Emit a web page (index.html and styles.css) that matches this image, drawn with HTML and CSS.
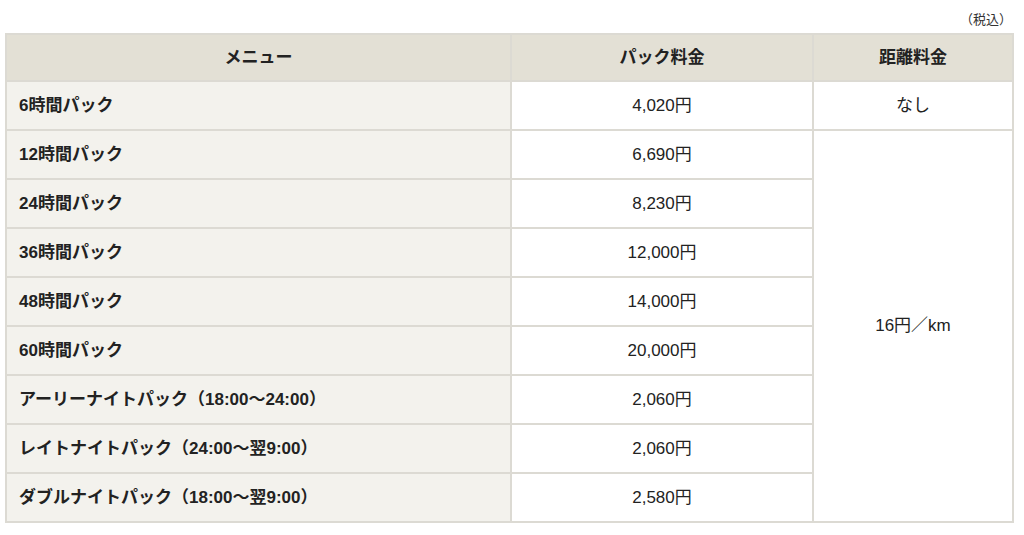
FILE: index.html
```html
<!DOCTYPE html>
<html lang="ja">
<head>
<meta charset="utf-8">
<link rel="stylesheet" href="styles.css">
</head>
<body>
<div class="wrap">
  <p class="note">（税込）</p>
  <table class="price">
    <colgroup>
      <col class="c-menu">
      <col class="c-pack">
      <col class="c-dist">
    </colgroup>
    <thead>
      <tr>
        <th>メニュー</th>
        <th>パック料金</th>
        <th>距離料金</th>
      </tr>
    </thead>
    <tbody>
      <tr><th>6時間パック</th><td>4,020円</td><td>なし</td></tr>
      <tr><th>12時間パック</th><td>6,690円</td><td rowspan="8">16円／km</td></tr>
      <tr><th>24時間パック</th><td>8,230円</td></tr>
      <tr><th>36時間パック</th><td>12,000円</td></tr>
      <tr><th>48時間パック</th><td>14,000円</td></tr>
      <tr><th>60時間パック</th><td>20,000円</td></tr>
      <tr><th>アーリーナイトパック（18:00〜24:00）</th><td>2,060円</td></tr>
      <tr><th>レイトナイトパック（24:00〜翌9:00）</th><td>2,060円</td></tr>
      <tr><th>ダブルナイトパック（18:00〜翌9:00）</th><td>2,580円</td></tr>
    </tbody>
  </table>
</div>
</body>
</html>
```

FILE: styles.css
```css
html, body {
  margin: 0;
  padding: 0;
  background: #ffffff;
}
body {
  font-family: "Liberation Sans", "Noto Sans CJK JP", sans-serif;
  color: #222222;
}
.wrap {
  width: 1007px;
  padding-left: 5px;
}
.note {
  margin: 0;
  height: 33px;
  box-sizing: border-box;
  padding-top: 12px;
  padding-right: 0;
  text-align: right;
  font-size: 13px;
  line-height: 16px;
  color: #333333;
}
.price {
  width: 1007px;
  border-collapse: collapse;
  table-layout: fixed;
  font-size: 17px;
}
.c-menu { width: 505px; }
.c-pack { width: 302px; }
.c-dist { width: 200px; }
.price th,
.price td {
  border: 2px solid #dcdad3;
  vertical-align: middle;
  padding: 0 12px;
  line-height: 20px;
}
.price thead th {
  height: 45px;
  background: #e3e0d5;
  font-weight: bold;
  text-align: center;
}
.price tbody tr {
  height: 49px;
}
.price tbody th {
  background: #f3f2ed;
  font-weight: bold;
  text-align: left;
}
.price tbody td {
  text-align: center;
  font-weight: normal;
}
```
